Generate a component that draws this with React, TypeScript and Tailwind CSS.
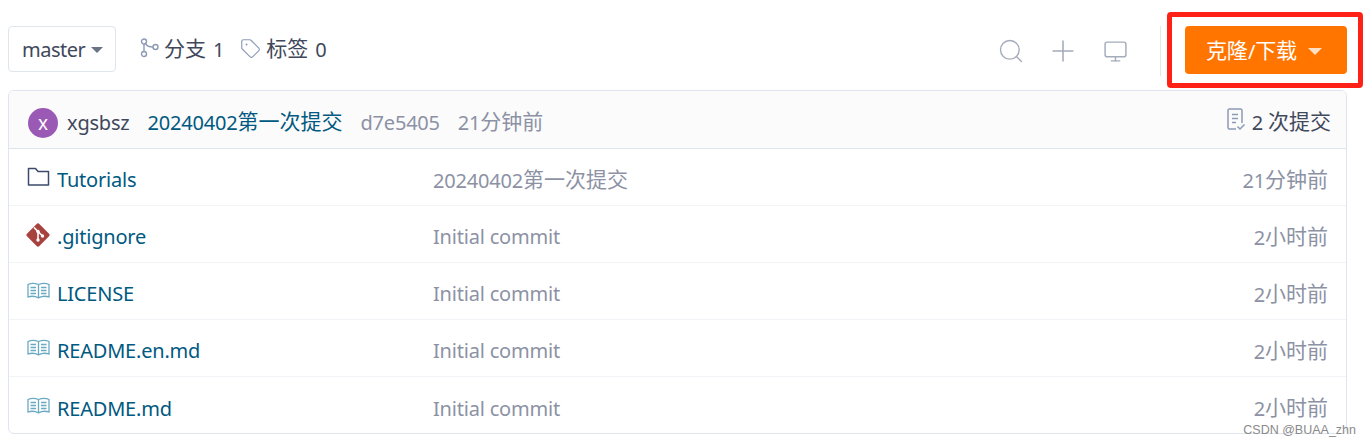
import { Search, Plus, Monitor, Tag } from 'lucide-react';

const files = [
  { name: 'Tutorials', type: 'folder', message: '20240402第一次提交', time: '21分钟前' },
  { name: '.gitignore', type: 'git', message: 'Initial commit', time: '2小时前' },
  { name: 'LICENSE', type: 'book', message: 'Initial commit', time: '2小时前' },
  { name: 'README.en.md', type: 'book', message: 'Initial commit', time: '2小时前' },
  { name: 'README.md', type: 'book', message: 'Initial commit', time: '2小时前' },
];

// chinese runs sit a bit larger than the latin ones in the screenshot
function Txt({ children }: { children: string }) {
  return (
    <span className="whitespace-pre">
      {children.split(/([\u4e00-\u9fff]+)/).map((part, i) =>
        /[\u4e00-\u9fff]/.test(part) ? (
          <span key={i} className="inline-block -translate-y-px text-[21px] tracking-normal">
            {part}
          </span>
        ) : (
          part
        ),
      )}
    </span>
  );
}

function GitLogo() {
  return (
    <svg width="24" height="24" viewBox="0 0 24 24" className="shrink-0 -mt-1 -ml-px">
      <path
        d="M10.4 1.2a2.2 2.2 0 0 1 3.2 0l9.2 9.2a2.2 2.2 0 0 1 0 3.2l-9.2 9.2a2.2 2.2 0 0 1-3.2 0l-9.2-9.2a2.2 2.2 0 0 1 0-3.2z"
        fill="#a8423f"
      />
      <path d="M8 4.5l4 4M12 8.5v8M12 8.5l5 5" stroke="#fff" strokeWidth="1.6" fill="none" />
      <circle cx="12" cy="8.5" r="1.7" fill="#fff" />
      <circle cx="12" cy="17" r="1.7" fill="#fff" />
      <circle cx="16.5" cy="13" r="1.7" fill="#fff" />
    </svg>
  );
}

function FolderIcon() {
  return (
    <svg width="23" height="20" viewBox="0 0 23 20" fill="none" className="shrink-0 -mt-[6px]">
      <path d="M1.5 1.5h7l2.5 3h10.5v13.500h-20z" stroke="#3d4a6b" strokeWidth="1.500" strokeLinejoin="round" />
    </svg>
  );
}

function BookIcon() {
  return (
    <svg width="23" height="18" viewBox="0 0 23 18" fill="none" className="shrink-0 -mt-[6px]" stroke="#6aa9c2" strokeWidth="1.300">
      <path d="M1 2.500c3-1.500 7-1.500 10.500 0c3.500-1.500 7.500-1.500 10.500 0v12.500c-3-1-7-1-10.500 .8c-3.500-1.800-7.500-1.800-10.500-.8z" />
      <path d="M11.500 2.500v13" />
      <path d="M3.500 5.500h5.500M3.500 8.500h5.500M3.500 11.500h5.500M14 5.500h5.500M14 8.500h5.500M14 11.500h5.500" />
    </svg>
  );
}

function FileIcon({ type }: { type: string }) {
  if (type === 'folder') return <FolderIcon />;
  if (type === 'git') return <GitLogo />;
  return <BookIcon />;
}

function BranchIcon() {
  return (
    <svg width="20" height="20" viewBox="0 0 20 20" fill="none" stroke="#8c9ab5" strokeWidth="1.400" className="-mt-[2px] mr-[4px]">
      <circle cx="4" cy="3.500" r="2.500" />
      <circle cx="4" cy="16" r="2.500" />
      <circle cx="15.500" cy="9" r="2.500" />
      <path d="M4 6v7.500M5.500 5.500c1 2.500 3 3.500 7.500 3.500" />
    </svg>
  );
}

function CommitsIcon() {
  return (
    <svg width="19" height="23" viewBox="0 0 19 23" fill="none" stroke="#8c9ab5" strokeWidth="1.500" className="-mt-[6px] mr-[6px]">
      <path d="M9 21H2.500a1.500 1.500 0 0 1-1.500-1.500V2.500A1.500 1.500 0 0 1 2.500 1h11A1.500 1.500 0 0 1 15 2.500V15" />
      <path d="M5 6.500h6M5 10.500h6M5 14.500h4" />
      <path d="M10.500 18.500l2.500 2.500l4.500-4.500" />
    </svg>
  );
}

export default function App() {
  return (
    <div
      className="relative w-[1371px] h-[445px] overflow-hidden bg-white pt-[26px] pl-[8px] pr-[24px] text-[20px] leading-[28px] tracking-[-0.2px]"
      style={{ fontFamily: '"Noto Sans", "Noto Sans CJK SC", sans-serif' }}
    >
      {/* Toolbar */}
      <div className="flex items-center h-[46px] mb-[19px]">
        <button className="flex items-center h-[46px] w-[108px] pl-[13px] pt-[2px] border border-[#dfe5ec] rounded text-[#40485b] tracking-[-0.5px]">
          master
          <span className="ml-[6px] border-x-[6px] border-x-transparent border-t-[6px] border-t-[#6a7285]" />
        </button>
        <div className="flex items-center ml-[24px] text-[#40485b] [word-spacing:2px]">
          <BranchIcon />
          <Txt>分支 1</Txt>
        </div>
        <div className="flex items-center ml-[16px] text-[#40485b] [word-spacing:2px]">
          <Tag size={21} strokeWidth={1.300} className="text-[#8c9ab5] -mt-[2px] mr-[5px]" />
          <Txt>标签 0</Txt>
        </div>
        <div className="flex items-center ml-auto mt-[4px] text-[#a4abba]">
          <div className="flex justify-center items-center w-[52px]">
            <Search size={28} strokeWidth={1.200} />
          </div>
          <div className="flex justify-center items-center w-[52px]">
            <Plus size={34} strokeWidth={1.100} />
          </div>
          <div className="flex justify-center items-center w-[52px]">
            <Monitor size={25} strokeWidth={1.400} />
          </div>
        </div>
        <div className="w-px h-[50px] mt-[4px] bg-[#e3e7ee] ml-[19px] mr-[24px]" />
        <button className="flex items-center justify-center gap-[11px] w-[162px] h-[48px] mt-[2px] pr-[4px] bg-[#ff7500] rounded text-white">
          <span className="pt-[2px]">
            <Txt>克隆/下载</Txt>
          </span>
          <span className="mt-[2px] border-x-[7px] border-x-transparent border-t-[7px] border-t-[#ffe0c4]" />
        </button>
      </div>

      {/* File table */}
      <div className="-mt-px h-[344px] border border-[#dfe5ef] rounded-md overflow-hidden">
        <div className="flex items-center h-[58px] pt-[6px] pl-[19px] pr-[15px] bg-[#fbfbfc] border-b border-[#dfe5ef]">
          <span className="flex items-center justify-center w-[30px] h-[30px] rounded-full bg-[#9b59b6] text-white text-[19px]">
            x
          </span>
          <span className="ml-[9px] text-[#40485b]">xgsbsz</span>
          <span className="ml-[18px] text-[#005980]">
            <Txt>20240402第一次提交</Txt>
          </span>
          <span className="ml-[18px] text-[#8c92a4]">d7e5405</span>
          <span className="ml-[18px] text-[#8c92a4]">
            <Txt>21分钟前</Txt>
          </span>
          <div className="flex items-center ml-auto text-[#40485b]">
            <CommitsIcon />
            <Txt>2 次提交</Txt>
          </div>
        </div>
        {files.map((file) => (
          <div
            key={file.name}
            className="flex items-center h-[57px] pt-[6px] pl-[18px] pr-[18px] border-b border-[#f1f3f7] last:border-b-0"
          >
            <div className="flex items-center w-[406px]">
              <FileIcon type={file.type} />
              <span className="ml-[7px] text-[#005980]">{file.name}</span>
            </div>
            <span className="text-[#8c92a4]">
              <Txt>{file.message}</Txt>
            </span>
            <span className="ml-auto text-[#8c92a4]">
              <Txt>{file.time}</Txt>
            </span>
          </div>
        ))}
      </div>

      {/* Red annotation box */}
      <div className="absolute left-[1167px] top-[12px] w-[196px] h-[76px] border-[5px] border-[#ff2116] rounded-[4px]" />

      {/* Watermark */}
      <span
        className="absolute right-[15px] top-[422px] text-[12.500px] leading-[16px] tracking-normal text-[#8a8a8a]"
        style={{ fontFamily: '"Liberation Sans", sans-serif' }}
      >
        CSDN @BUAA_zhn
      </span>
    </div>
  );
}
